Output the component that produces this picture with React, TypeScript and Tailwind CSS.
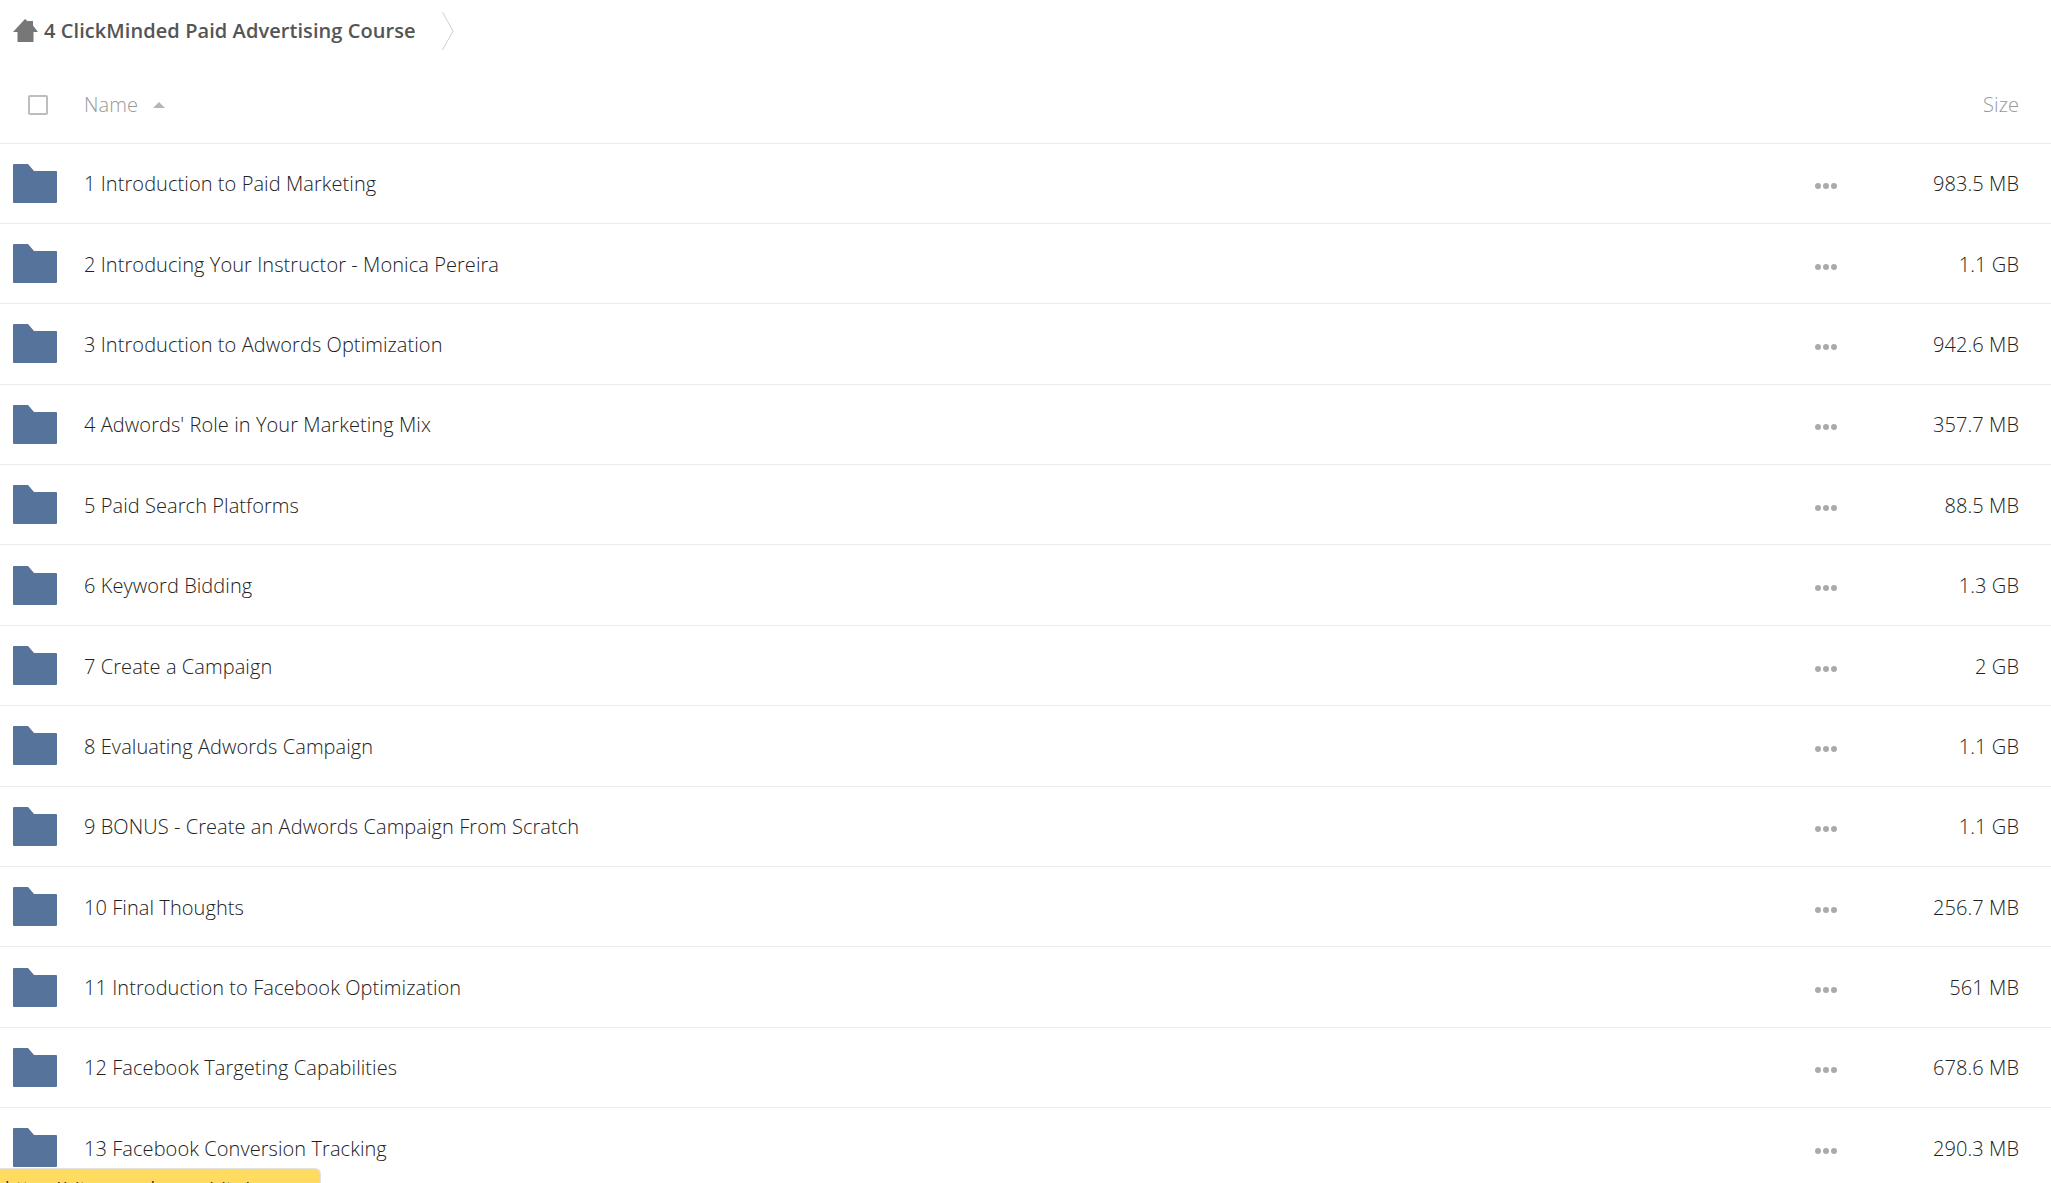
const folders = [
  { name: "1 Introduction to Paid Marketing", size: "983.5 MB" },
  { name: "2 Introducing Your Instructor - Monica Pereira", size: "1.1 GB" },
  { name: "3 Introduction to Adwords Optimization", size: "942.6 MB" },
  { name: "4 Adwords' Role in Your Marketing Mix", size: "357.7 MB" },
  { name: "5 Paid Search Platforms", size: "88.5 MB" },
  { name: "6 Keyword Bidding", size: "1.3 GB" },
  { name: "7 Create a Campaign", size: "2 GB" },
  { name: "8 Evaluating Adwords Campaign", size: "1.1 GB" },
  { name: "9 BONUS - Create an Adwords Campaign From Scratch", size: "1.1 GB" },
  { name: "10 Final Thoughts", size: "256.7 MB" },
  { name: "11 Introduction to Facebook Optimization", size: "561 MB" },
  { name: "12 Facebook Targeting Capabilities", size: "678.6 MB" },
  { name: "13 Facebook Conversion Tracking", size: "290.3 MB" },
];

const FolderIcon = () => (
  <svg width="44" height="39" viewBox="0 0 44 39" className="shrink-0">
    <path d="M1 0H15L21 7H43a1 1 0 0 1 1 1V38a1 1 0 0 1-1 1H1a1 1 0 0 1-1-1V1a1 1 0 0 1 1-1z" fill="#55739b" />
  </svg>
);

const HomeIcon = () => (
  <svg width="25" height="23" viewBox="0 0 25 23" className="shrink-0">
    <path d="M12 0L15 2.5V2H20V6.5L25 13H20.5V23H4.5V13H0z" fill="#777" />
  </svg>
);

const App = () => {
  return (
    <div className="relative h-[1183px] overflow-hidden bg-white font-['Open_Sans',sans-serif]">
      <div className="flex h-[60px] items-center pl-[13px] pt-[1px]">
        <HomeIcon />
        <span className="ml-[6px] pt-[1px] text-[20px] font-semibold tracking-[0.07px] text-[#555]">4 ClickMinded Paid Advertising Course</span>
        <svg width="12" height="40" viewBox="0 0 12 40" className="ml-[26px] shrink-0">
          <path d="M0.5 1L11 20L0.5 39" fill="none" stroke="#d0d0d0" strokeWidth="1" />
        </svg>
      </div>

      <div className="flex h-[83.5px] items-center border-b border-[#ebebeb] pt-[8px] pr-[32px] text-[20px] font-light tracking-[0.07px] text-[#999]">
        <div className="ml-[28px] h-[20px] w-[20px] rounded-[2px] border-2 border-[#bdbdbd]" />
        <span className="ml-[36px]">Name</span>
        <span className="ml-[15px] h-0 w-0 border-x-[6px] border-b-[6px] border-x-transparent border-b-[#b5b5b5]" />
        <span className="ml-auto">Size</span>
      </div>

      {folders.map((folder) => (
        <div key={folder.name} className="flex h-[80.4px] items-center border-b border-[#ebebeb] pl-[13px] pr-[32px] text-[20px] font-light tracking-[0.07px] text-[#222]">
          <FolderIcon />
          <span className="ml-[27px] pt-[2px]">{folder.name}</span>
          <span className="ml-auto flex gap-[2px] pt-[6px]">
            <span className="h-[6px] w-[6px] rounded-full bg-[#aaa]" />
            <span className="h-[6px] w-[6px] rounded-full bg-[#aaa]" />
            <span className="h-[6px] w-[6px] rounded-full bg-[#aaa]" />
          </span>
          <span className="w-[182px] pt-[2px] text-right">{folder.size}</span>
        </div>
      ))}

      <div className="absolute bottom-0 left-0 h-[15px] w-[321px] overflow-hidden rounded-tr-[6px] border-t border-r border-[#e2e2e2] bg-[#ffdc5f] pl-[5px] pt-[7px] text-[18px] leading-[24px] whitespace-nowrap text-[#333]">
        https://sites.google.com/site/
      </div>
    </div>
  );
};

export default App;
